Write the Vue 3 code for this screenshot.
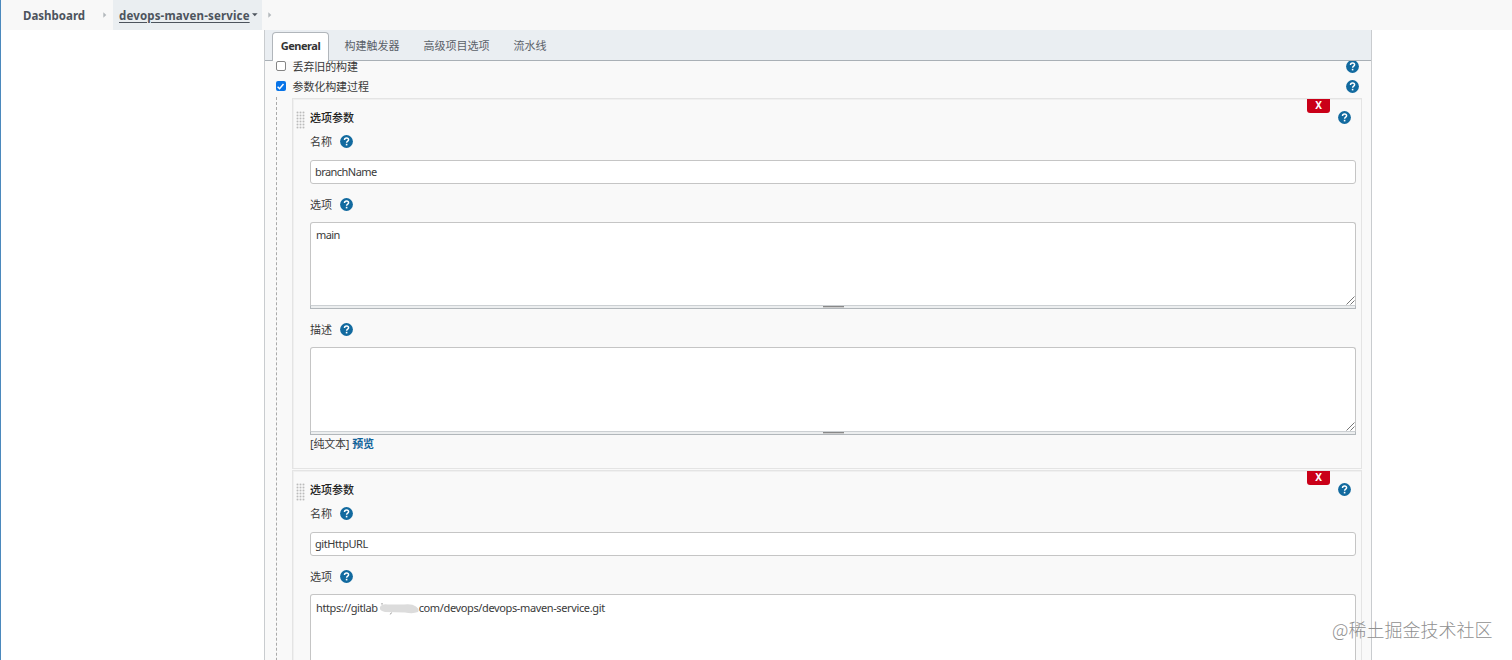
<script setup>
import { h } from 'vue'

const tabs = [
  { text: 'General', w: 57, on: true },
  { text: '构建触发器', w: 86 },
  { text: '高级项目选项', w: 83 },
  { text: '流水线', w: 64 },
]

const cards = [
  { name: 'branchName', cls: 'branch', choices: 'main', full: true },
  { name: 'gitHttpURL', cls: 'giturl', host: true },
]

const Help = () =>
  h('svg', { class: 'help', width: 13, height: 13, viewBox: '0 0 13 13' }, [
    h('circle', { cx: 6.5, cy: 6.5, r: 6.4, fill: '#126a9f' }),
    h('path', {
      d: 'M4.5 5.1C4.5 3.8 5.3 3 6.6 3S8.6 3.7 8.6 4.8C8.6 6.2 6.7 6.1 6.6 7.8',
      fill: 'none', stroke: '#fff', 'stroke-width': 1.45,
    }),
    h('rect', { x: 5.8, y: 8.8, width: 1.6, height: 1.6, fill: '#fff' }),
  ])
</script>

<template>
  <div class="page">
    <header class="crumbs">
      <b class="dash">Dashboard</b>
      <svg class="sep" width="4" height="6" viewBox="0 0 4 6"><path d="M0.3 0.3L3.3 3L0.3 5.7Z" fill="#b3b8bc" /></svg>
      <div class="current">
        <b class="job">devops-maven-service</b>
        <svg width="6" height="4" viewBox="0 0 6 4"><path d="M0 0.3H5.6L2.8 3.3Z" fill="#4d545d" /></svg>
      </div>
      <svg class="sep last" width="4" height="6" viewBox="0 0 4 6"><path d="M0.3 0.3L3.3 3L0.3 5.7Z" fill="#b3b8bc" /></svg>
    </header>

    <main class="panel">
      <nav class="tabs">
        <div v-for="t in tabs" :key="t.text" class="tab" :class="{ on: t.on }" :style="{ width: t.w + 'px' }">{{ t.text }}</div>
      </nav>
      <div class="scroll">
        <div class="opt first"><span class="box"></span><span class="zh">丢弃旧的构建</span><Help /></div>
        <div class="opt">
          <span class="box checked">
            <svg width="9" height="9" viewBox="0 0 9 9"><path d="M1.6 4.7L3.6 6.7L7.5 2.1" fill="none" stroke="#fff" stroke-width="1.5" /></svg>
          </span>
          <span class="zh">参数化构建过程</span><Help />
        </div>
        <div class="nested">
          <section v-for="c in cards" :key="c.name" class="card">
            <div class="grip"></div>
            <div class="remove">X</div>
            <div class="row title"><span>选项参数</span><Help /></div>
            <div class="row"><span>名称</span><Help /></div>
            <div class="input"><span :class="c.cls">{{ c.name }}</span></div>
            <div class="row mid"><span>选项</span><Help /></div>
            <div class="area">
              <span v-if="c.host" class="url"><span class="u1">https://gitlab</span><svg class="smudge" width="40" height="13" viewBox="0 0 40 13"><path d="M1 5Q3 1.5 9 2.5H25Q33 1.5 37 4.5T39 10Q34 12 26 10.5L6 10Q0 9 1 5Z" fill="#dcdcdc" /><path d="M3 1V2.6M12.5 10.6L11.3 12.4" stroke="#888" stroke-width="0.9" /></svg><span class="u2">com/devops/devops-maven-service.git</span></span>
              <span v-else class="main">{{ c.choices }}</span>
              <svg class="corner" width="9" height="9" viewBox="0 0 9 9"><path d="M0.5 8.5L8.5 0.5M4.5 8.5L8.5 4.5" stroke="#666" stroke-width="0.9" /></svg>
            </div>
            <template v-if="c.full">
              <div class="handle"><i></i></div>
              <div class="row desc"><span>描述</span><Help /></div>
              <div class="area second">
                <svg class="corner" width="9" height="9" viewBox="0 0 9 9"><path d="M0.5 8.5L8.5 0.5M4.5 8.5L8.5 4.5" stroke="#666" stroke-width="0.9" /></svg>
              </div>
              <div class="handle"><i></i></div>
              <div class="preview"><span>[纯文本]</span><b>预览</b></div>
            </template>
          </section>
        </div>
      </div>
    </main>
    <div class="watermark">@稀土掘金技术社区</div>
  </div>
</template>

<style>
body { margin: 0; overflow: hidden; }
</style>

<style scoped>
* { box-sizing: border-box; }
.page {
  position: relative; width: 1512px; height: 660px; overflow: hidden; background: #fff;
  border-left: 1px solid #4b89bd; color: #3a3a3a;
  font: 11px/16px "Noto Sans", "Noto Sans CJK SC", sans-serif;
}
.crumbs { display: flex; align-items: center; height: 30px; background: #f8f8f8; color: #4d545d; }
.crumbs b { font-size: 11.5px; white-space: nowrap; padding-top: 1px; }
.dash { width: 80px; padding-left: 22px; letter-spacing: 0; }
.sep { margin: 0 6px 0 22px; flex: none; }
.sep.last { margin: 0 0 0 6px; }
.current { display: flex; align-items: center; width: 149px; height: 30px; padding-left: 6px; background: #eaeef1; gap: 2px; }
.job { text-decoration: underline; text-underline-offset: 2px; letter-spacing: 0.15px; }
.panel { width: 1108px; height: 630px; margin-left: 263px; border: solid #c9cccf; border-width: 0 1px; background: #f9f9f9; }
.tabs { display: flex; height: 31px; padding: 2px 0 0 7px; background: #eaeef2; border-bottom: 1px solid #a9b0b6; }
.tab { height: 28px; line-height: 28px; text-align: center; color: #5a6169; white-space: nowrap; }
.tab.on { height: 29px; background: #fff; border: 1px solid #b1b6bb; border-bottom: 0; border-radius: 4px 4px 0 0; font-weight: bold; line-height: 25px; color: #333; letter-spacing: -0.45px; }
.scroll { height: 599px; overflow: hidden; }
.opt { display: flex; align-items: center; height: 20px; padding: 0 12px 0 11px; gap: 7px; }
.opt.first { margin-top: -6px; height: 21px; }
.opt .help { margin-left: auto; }
.opt.first .help { margin-top: 1px; }
.box { display: flex; flex: none; width: 10px; height: 10px; margin-left: -0.5px; background: #fff; border: 1px solid #858585; border-radius: 2px; }
.box.checked { background: #0874e8; border: 0; align-items: center; justify-content: center; }
.zh { letter-spacing: -0.1px; padding-top: 2px; }
.help { flex: none; display: block; }
.nested { margin: 1px 9px 0 11px; padding-left: 15px; border-left: 1px dashed #aaa; padding-top: 1px; }
.card { position: relative; height: 371px; margin-bottom: 1px; padding: 6px 5px 0 17px; border: 1px solid #e4e4e4; box-shadow: inset 1px 1px #f0f0f0; }
.grip {
  position: absolute; left: 3px; top: 12px; width: 9px; height: 18px;
  background: radial-gradient(circle, #bbb 0.7px, #ececec 1.1px, transparent 1.6px) 0 0 / 3px 3px;
}
.remove { position: absolute; right: 31px; top: 0; width: 23px; height: 14px; background: #ca0018; color: #fff; border-radius: 0 0 3px 3px; font-weight: bold; font-size: 10px; line-height: 13px; text-align: center; }
.row { display: flex; align-items: center; height: 24px; gap: 8px; }
.row > span { padding-top: 1px; }
.title { color: #222; font-weight: 500; padding-right: 5px; }
.title .help { margin-left: auto; }
.input { height: 24px; margin-top: 7px; padding-left: 4px; border: 1px solid #c5c5c5; border-radius: 3px; background: #fff; line-height: 22px; }
.branch { letter-spacing: -0.55px; }
.giturl { letter-spacing: -0.42px; }
.main { display: block; margin-top: -1px; letter-spacing: -0.6px; }
.row.mid { margin: 8px 0 6px; }
.area { position: relative; height: 83px; padding: 5px; border: 1px solid #c5c5c5; border-bottom: 0; border-radius: 3px 3px 0 0; background: #fff; }
.area.second { height: 84px; }
.corner { position: absolute; right: 0; bottom: 0; }
.handle { height: 4px; background: #eceeef; border: 1px solid #b2b7bb; border-top-color: #ccd0d3; display: flex; justify-content: center; }
.handle i { width: 21px; height: 2px; border-top: 1px solid #888; background: #ccc; }
.row.desc { margin: 8px 0 6px; }
.preview { display: flex; gap: 3px; height: 18px; padding-top: 1px; letter-spacing: -0.2px; }
.preview b { color: #12639a; }
.url { display: flex; align-items: center; }
.u1 { letter-spacing: -0.4px; }
.u2 { letter-spacing: -0.37px; }
.smudge { flex: none; margin-left: 1px; }
.watermark { position: absolute; left: 1331px; top: 616px; font: 18px/26px "Noto Sans CJK SC", sans-serif; font-weight: 300; color: #909090; white-space: nowrap; }
</style>
